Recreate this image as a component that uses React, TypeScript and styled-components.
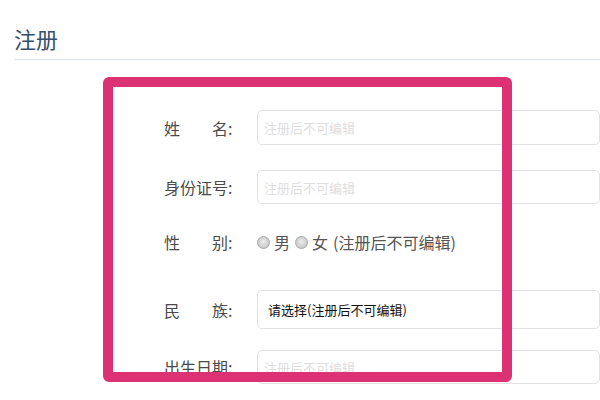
import React from 'react'
import styled, { createGlobalStyle } from 'styled-components'

const GlobalStyle = createGlobalStyle`
  html, body {
    margin: 0;
    padding: 0;
    background: #fff;
    overflow: hidden;
  }
  body {
    font-family: "Noto Sans CJK SC", "Liberation Sans", sans-serif;
    color: #333;
  }
`

const Page = styled.div`
  position: relative;
  width: 600px;
  height: 400px;
  padding: 0 0 0 14px;
  box-sizing: border-box;
  overflow: hidden;
`

const Title = styled.h2`
  margin: 0;
  padding: 23px 0 6px;
  width: 800px;
  font-size: 22px;
  line-height: 30px;
  font-weight: 400;
  color: #34506e;
  border-bottom: 1px solid #dfe4ea;
`

const Form = styled.form`
  display: flex;
  flex-direction: column;
  margin-top: 50px;
  padding-left: 150px;
`

const Row = styled.div<{ $height: number; $gap?: number }>`
  display: flex;
  align-items: center;
  height: ${p => p.$height}px;
  margin-top: ${p => p.$gap ?? 0}px;
`

const Label = styled.label`
  flex: 0 0 93px;
  box-sizing: border-box;
  padding-right: 24px;
  font-size: 16px;
  color: #4a4a4a;
  white-space: nowrap;
`

const TextInput = styled.input`
  width: 420px;
  height: 100%;
  box-sizing: border-box;
  padding: 0 6px;
  border: 1px solid #e2e2e2;
  border-radius: 5px;
  font-family: inherit;
  font-size: 13px;
  color: #333;
  outline: none;
  &::placeholder {
    color: #dedede;
  }
`

const Select = styled.div`
  display: flex;
  align-items: center;
  width: 420px;
  height: 100%;
  box-sizing: border-box;
  padding: 0 10px;
  border: 1px solid #e2e2e2;
  border-radius: 5px;
  font-size: 13px;
  color: #111;
`

const RadioGroup = styled.div`
  display: flex;
  align-items: center;
  font-size: 16px;
  color: #555;
  white-space: nowrap;
`

const Radio = styled.span`
  display: inline-block;
  width: 11px;
  height: 11px;
  margin-right: 4px;
  border-radius: 50%;
  border: 1px solid #a8a8a8;
  background: radial-gradient(circle at 50% 45%, #ececec 0%, #d0d0d0 60%, #bdbdbd 100%);
`

const Choice = styled.span`
  margin-right: 5px;
`

const Highlight = styled.div`
  position: absolute;
  left: 103px;
  top: 77px;
  width: 409px;
  height: 305px;
  box-sizing: border-box;
  border: 10px solid #dc3273;
  border-radius: 6px;
  pointer-events: none;
`

const App = () => (
  <>
    <GlobalStyle />
    <Page>
      <Title>注册</Title>
      <Form>
        <Row $height={35}>
          <Label>姓　　名:</Label>
          <TextInput placeholder='注册后不可编辑' />
        </Row>
        <Row $height={34} $gap={25}>
          <Label>身份证号:</Label>
          <TextInput placeholder='注册后不可编辑' />
        </Row>
        <Row $height={36} $gap={20}>
          <Label>性　　别:</Label>
          <RadioGroup>
            <Radio />
            <Choice>男</Choice>
            <Radio />
            <Choice>女</Choice>
            <span>(注册后不可编辑)</span>
          </RadioGroup>
        </Row>
        <Row $height={39} $gap={30}>
          <Label>民　　族:</Label>
          <Select>请选择(注册后不可编辑)</Select>
        </Row>
        <Row $height={34} $gap={21}>
          <Label>出生日期:</Label>
          <TextInput placeholder='注册后不可编辑' />
        </Row>
      </Form>
      <Highlight />
    </Page>
  </>
)

export default App
